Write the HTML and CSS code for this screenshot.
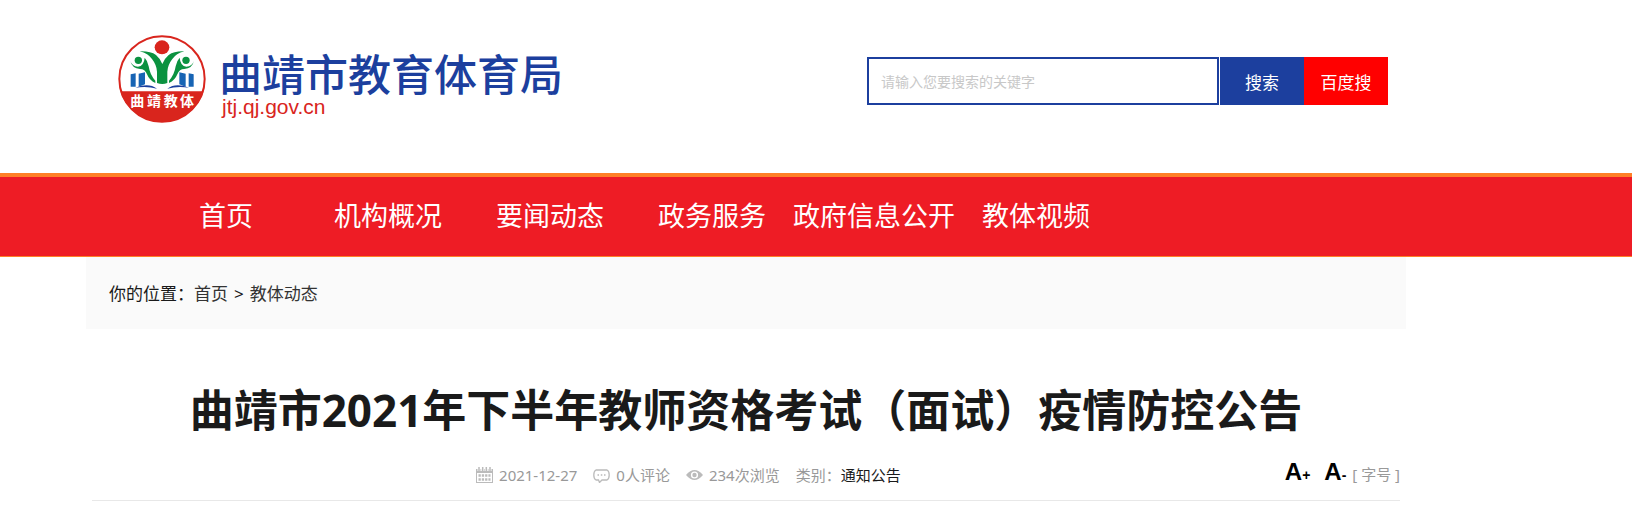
FILE: index.html
```html
<!DOCTYPE html>
<html lang="zh-CN">
<head>
<meta charset="utf-8">
<title>曲靖市教育体育局</title>
<link rel="stylesheet" href="styles.css">
</head>
<body>
<header class="header wrap">
  <a class="brand" href="#">
    <svg class="emblem" viewBox="10 14 264 264" aria-hidden="true">
      <circle cx="142" cy="146" r="128" fill="#fff" stroke="#d9251d" stroke-width="6"/>
      <path d="M17 183H267A131 131 0 0 1 17 183Z" fill="#d9251d"/>
      <ellipse cx="142" cy="51" rx="22" ry="21" fill="#d9251d"/>
      <path d="M75 63Q108 62 124 74Q136 84 143 101Q150 84 162 74Q178 62 209 63Q184 70 173 86Q159 104 158 124V158Q143 164 127 158V124Q126 104 112 86Q101 70 75 63Z" fill="#0b9240"/>
      <circle cx="71" cy="90" r="11" fill="#0b9240"/>
      <circle cx="214" cy="90" r="11" fill="#0b9240"/>
      <path d="M47 92Q52 108 70 109Q88 107 90 82Q99 91 102 108Q106 134 122 151V158Q104 150 97 132Q91 116 76 116Q52 114 47 92Z" fill="#0b9240"/>
      <path d="M238 92Q233 108 215 109Q197 107 195 82Q186 91 183 108Q179 134 163 151V158Q181 150 188 132Q194 116 209 116Q233 114 238 92Z" fill="#0b9240"/>
      <path d="M48 132L63 129V169H48ZM72 130L91 126V162L72 169ZM237 132L222 129V169H237ZM213 130L194 126V162L213 169Z" fill="#1764b4"/>
      <path d="M62 172Q102 156 127 175Q98 167 62 172ZM223 172Q183 156 158 175Q187 167 223 172Z" fill="#1c3f9e"/>
      <text y="226"><tspan class="emblem-text" x="47">曲</tspan><tspan class="emblem-text" x="97">靖</tspan><tspan class="emblem-text" x="147">教</tspan><tspan class="emblem-text" x="196">体</tspan></text>
    </svg>
    <span class="brand-text">
      <span class="brand-name">曲靖市教育体育局</span>
      <span class="brand-url">jtj.qj.gov.cn</span>
    </span>
  </a>
  <form class="search" role="search">
    <input class="search-input" type="text" aria-label="搜索关键字" placeholder="请输入您要搜索的关键字">
    <button class="btn btn-site" type="button">搜索</button>
    <button class="btn btn-baidu" type="button">百度搜</button>
  </form>
</header>
<nav class="nav">
  <div class="nav-list wrap">
    <a href="#">首页</a>
    <a href="#">机构概况</a>
    <a href="#">要闻动态</a>
    <a href="#">政务服务</a>
    <a href="#">政府信息公开</a>
    <a href="#">教体视频</a>
  </div>
</nav>
<main class="wrap">
  <div class="crumbs">你的位置：<a href="#">首页</a><span class="sep">&gt;</span><a href="#">教体动态</a></div>
  <article class="article">
    <h1 class="title">曲靖市2021年下半年教师资格考试（面试）疫情防控公告</h1>
    <div class="info">
      <div class="meta">
        <span class="meta-item">
          <svg class="icon" viewBox="0 0 17 16" aria-hidden="true">
            <path d="M0 2H17V16H0Z" fill="#bbb"/>
            <path d="M1 6H16V15H1Z" fill="#fff"/>
            <path d="M3 0V4M6.700 0V4M10.300 0V4M14 0V4" stroke="#fff" stroke-width="3"/>
            <path d="M3 0V4M6.700 0V4M10.300 0V4M14 0V4" stroke="#bbb" stroke-width="1.500"/>
            <path d="M2.500 8.500H14.500M2.500 12.500H14.500" stroke="#bbb" stroke-width="2.400" stroke-dasharray="2.300 1"/>
          </svg>
          2021-12-27
        </span>
        <span class="meta-item">
          <svg class="icon" viewBox="0 0 17 16" aria-hidden="true">
            <path d="M3 3H14Q16.200 4 16.200 8T14 13H9L6.500 15.500L5.500 13H3Q.8 12 .8 8T3 3Z" fill="none" stroke="#bbb" stroke-width="1.300"/>
            <path d="M4.500 8H6M7.800 8H9.300M11 8H12.500" stroke="#bbb" stroke-width="1.300"/>
          </svg>
          0人评论
        </span>
        <span class="meta-item">
          <svg class="icon" viewBox="0 0 17 16" aria-hidden="true">
            <path d="M0 8Q8.500-2 17 8Q8.500 18 0 8Z" fill="#bbb"/>
            <circle cx="8.500" cy="8" r="3.600" fill="#fff"/>
            <circle cx="8.500" cy="8" r="2.200" fill="#bbb"/>
          </svg>
          234次浏览
        </span>
        <span class="meta-item">类别：<a class="category" href="#">通知公告</a></span>
      </div>
      <div class="sizer">
        <button class="size-btn" type="button">A<small>+</small></button>
        <button class="size-btn" type="button">A<small>-</small></button>
        <span>[ 字号 ]</span>
      </div>
    </div>
  </article>
</main>
</body>
</html>
```
FILE: styles.css
```css
* { box-sizing: border-box; }
body {
  margin: 0;
  padding: 0;
  background: #fff;
  color: #1a1a1a;
  font-family: "Noto Sans", "Noto Sans CJK SC", sans-serif;
  font-size: 17px;
}
a { color: inherit; text-decoration: none; }
button { border: 0; padding: 0; background: none; font: inherit; color: inherit; cursor: pointer; }
.wrap { max-width: 1320px; margin-left: 86px; }

.header {
  display: flex;
  justify-content: space-between;
  align-items: flex-start;
  padding: 35px 18px 50px 32px;
}
.brand { display: flex; gap: 13px; }
.emblem { width: 88px; height: 88px; }
.emblem-text { font-size: 42px; font-weight: 700; fill: #fff; font-family: "Noto Sans CJK SC", sans-serif; }
.brand-text { display: flex; flex-direction: column; padding-top: 16px; }
.brand-name {
  color: #1c3f9e;
  font-family: "Noto Sans CJK SC", sans-serif;
  font-size: 43px;
  font-weight: 500;
  line-height: 43px;
}
.brand-url { color: #d9251d; font-family: "Liberation Sans", sans-serif; font-size: 21px; line-height: 26px; padding-left: 3px; }
.search { display: flex; height: 48px; margin-top: 22px; }
.search-input {
  width: 352px;
  margin-right: 1px;
  padding: 0 12px;
  border: 2px solid #1c3f9e;
  font: inherit;
  font-size: 14px;
  outline: 0;
}
.search-input::placeholder { color: #c8c8c8; opacity: 1; }
.btn { width: 84px; color: #fff; }
.btn-site { background: #1c3f9e; }
.btn-baidu { background: #f00; }

.nav { background: #ee1c25; border-top: 4px solid #ff7f27; border-bottom: 1px solid #ff7f27; }
.nav-list { display: grid; grid-template-columns: repeat(6, 162px); padding-left: 59px; }
.nav-list a { color: #fff; font-size: 27px; line-height: 78px; padding-bottom: 1px; text-align: center; white-space: nowrap; }

.crumbs { padding: 1px 23px 0; background: #fafafa; line-height: 71px; }
.crumbs a { color: #333; }
.sep { padding: 0 6px; }
.article { padding: 48px 6px 0; }
.title { margin: 0; font-size: 44px; line-height: 66px; text-align: center; }
.info { display: flex; align-items: center; height: 58px; padding-top: 6px; border-bottom: 1px solid #e8e8e8; color: #999; font-size: 15px; }
.meta { display: flex; flex: 1; justify-content: center; gap: 16px; }
.meta-item { display: flex; align-items: center; }
.icon { width: 17px; height: 16px; margin-right: 6px; }
.category { color: #1a1a1a; }
.sizer { display: flex; align-items: baseline; gap: 6px; padding-bottom: 5px; }
.size-btn { color: #000; font: bold 24px "Liberation Sans", sans-serif; }
.size-btn:first-child { margin-right: 8px; }
.size-btn small { font-size: 14px; }
```
